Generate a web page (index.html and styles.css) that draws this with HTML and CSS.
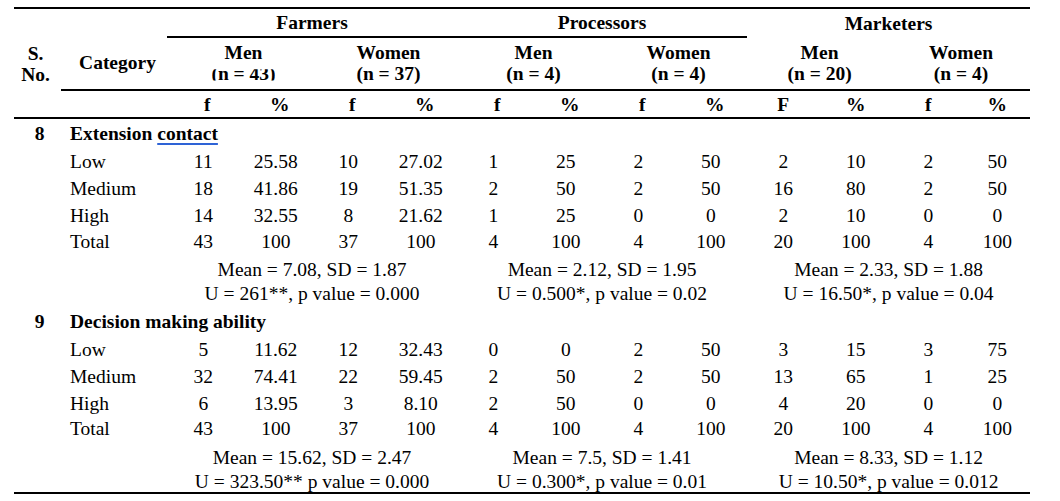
FILE: index.html
```html
<!DOCTYPE html>
<html lang="en">
<head>
<meta charset="utf-8">
<title>Table</title>
<link rel="stylesheet" href="styles.css">
</head>
<body>
<div class="page">
<table class="data">
  <colgroup>
    <col class="c-sno"><col class="c-cat">
    <col class="c-num"><col class="c-num"><col class="c-num"><col class="c-num">
    <col class="c-num"><col class="c-num"><col class="c-num"><col class="c-num">
    <col class="c-num"><col class="c-num"><col class="c-num"><col class="c-last">
  </colgroup>
  <thead>
    <tr class="r-group">
      <th></th><th></th>
      <th colspan="4" class="bb">Farmers</th>
      <th colspan="4" class="bb">Processors</th>
      <th colspan="4">Marketers</th>
    </tr>
    <tr class="r-sub">
      <th class="sno-h">S.<br>No.</th>
      <th class="bb cat-h">Category</th>
      <th colspan="2" class="bb sh">Men<br><span class="clipped">(n = 43)</span></th>
      <th colspan="2" class="bb sh">Women<br>(n = 37)</th>
      <th colspan="2" class="bb sh">Men<br>(n = 4)</th>
      <th colspan="2" class="bb sh">Women<br>(n = 4)</th>
      <th colspan="2" class="bb">Men<br>(n = 20)</th>
      <th colspan="2" class="bb">Women<br>(n = 4)</th>
    </tr>
    <tr class="r-fp">
      <th></th><th></th>
      <th class="sh">f</th><th class="sh">%</th><th class="sh">f</th><th class="sh">%</th>
      <th class="sh">f</th><th class="sh">%</th><th class="sh">f</th><th class="sh">%</th>
      <th>F</th><th>%</th><th>f</th><th>%</th>
    </tr>
  </thead>
  <tbody>
    <tr class="r-sec">
      <td class="sno">8</td>
      <td colspan="13" class="sec">Extension <span class="spell">contact</span></td>
    </tr>
    <tr class="r-28">
      <td></td><td class="cat">Low</td>
      <td>11</td><td>25.58</td><td>10</td><td>27.02</td>
      <td>1</td><td>25</td><td>2</td><td>50</td>
      <td>2</td><td>10</td><td>2</td><td>50</td>
    </tr>
    <tr class="r-27">
      <td></td><td class="cat">Medium</td>
      <td>18</td><td>41.86</td><td>19</td><td>51.35</td>
      <td>2</td><td>50</td><td>2</td><td>50</td>
      <td>16</td><td>80</td><td>2</td><td>50</td>
    </tr>
    <tr class="r-27">
      <td></td><td class="cat">High</td>
      <td>14</td><td>32.55</td><td>8</td><td>21.62</td>
      <td>1</td><td>25</td><td>0</td><td>0</td>
      <td>2</td><td>10</td><td>0</td><td>0</td>
    </tr>
    <tr class="r-25">
      <td></td><td class="cat">Total</td>
      <td>43</td><td>100</td><td>37</td><td>100</td>
      <td>4</td><td>100</td><td>4</td><td>100</td>
      <td>20</td><td>100</td><td>4</td><td>100</td>
    </tr>
    <tr class="r-stat">
      <td></td><td></td>
      <td colspan="4" class="stat"><div class="stat-box">Mean = 7.08, SD = 1.87<br>U = 261**, p value = 0.000</div></td>
      <td colspan="4" class="stat"><div class="stat-box">Mean = 2.12, SD = 1.95<br>U = 0.500*, p value = 0.02</div></td>
      <td colspan="4" class="stat"><div class="stat-box">Mean = 2.33, SD = 1.88<br>U = 16.50*, p value = 0.04</div></td>
    </tr>
    <tr class="r-sec2">
      <td class="sno">9</td>
      <td colspan="13" class="sec">Decision making ability</td>
    </tr>
    <tr class="r-27">
      <td></td><td class="cat">Low</td>
      <td>5</td><td>11.62</td><td>12</td><td>32.43</td>
      <td>0</td><td>0</td><td>2</td><td>50</td>
      <td>3</td><td>15</td><td>3</td><td>75</td>
    </tr>
    <tr class="r-27">
      <td></td><td class="cat">Medium</td>
      <td>32</td><td>74.41</td><td>22</td><td>59.45</td>
      <td>2</td><td>50</td><td>2</td><td>50</td>
      <td>13</td><td>65</td><td>1</td><td>25</td>
    </tr>
    <tr class="r-27">
      <td></td><td class="cat">High</td>
      <td>6</td><td>13.95</td><td>3</td><td>8.10</td>
      <td>2</td><td>50</td><td>0</td><td>0</td>
      <td>4</td><td>20</td><td>0</td><td>0</td>
    </tr>
    <tr class="r-23">
      <td></td><td class="cat">Total</td>
      <td>43</td><td>100</td><td>37</td><td>100</td>
      <td>4</td><td>100</td><td>4</td><td>100</td>
      <td>20</td><td>100</td><td>4</td><td>100</td>
    </tr>
    <tr class="r-stat2">
      <td></td><td></td>
      <td colspan="4" class="stat"><div class="stat-box">Mean = 15.62, SD = 2.47<br>U = 323.50** p value = 0.000</div></td>
      <td colspan="4" class="stat"><div class="stat-box">Mean = 7.5, SD = 1.41<br>U = 0.300*, p value = 0.01</div></td>
      <td colspan="4" class="stat"><div class="stat-box">Mean = 8.33, SD = 1.12<br>U = 10.50*, p value = 0.012</div></td>
    </tr>
  </tbody>
</table>
</div>
</body>
</html>
```

FILE: styles.css
```css
html, body {
  margin: 0;
  padding: 0;
  background: #ffffff;
}

body {
  font-family: "Liberation Serif", "Times New Roman", serif;
  font-size: 19.5px;
  color: #000000;
}

.page {
  padding: 7px 0 0 14px;
}

.data {
  border-collapse: separate;
  border-spacing: 0;
  table-layout: fixed;
  width: 1016px;
  border-top: 2px solid #000;
  border-bottom: 2px solid #000;
}

.c-sno { width: 47px; }
.c-cat { width: 106px; }
.c-num { width: 72.5px; }
.c-last { width: 65.5px; }

th, td {
  padding: 0;
  text-align: center;
  vertical-align: middle;
  line-height: 21px;
  white-space: nowrap;
}

th {
  font-weight: bold;
}

.bb {
  border-bottom: 2px solid #000;
}

/* header rows */
.r-group { height: 29px; }

.r-sub { height: 53px; }
.r-sub th { padding-bottom: 2px; }

.r-fp { height: 28px; }
.r-fp th { border-bottom: 2px solid #000; }

.r-sub th.sh,
.r-fp th.sh {
  padding-left: 8px;
}

.sno-h {
  padding-right: 4px;
}

.r-sub th.cat-h {
  padding-left: 7px;
}

.clipped {
  display: inline-block;
  clip-path: inset(32% 0 14% 0);
}

/* body rows */
.sno {
  font-weight: bold;
  padding-left: 4px;
}

.sec {
  text-align: left;
  font-weight: bold;
  padding-left: 9px;
}

.spell {
  text-decoration: underline;
  text-decoration-color: #2e63d6;
  text-decoration-thickness: 2px;
  text-underline-offset: 3px;
}

.cat {
  text-align: left;
  padding-left: 9px;
}

.r-sec { height: 28px; }
.r-sec2 { height: 29px; }
.r-28 { height: 28px; }
.r-27 { height: 27px; }
.r-25 { height: 25px; }
.r-23 { height: 23px; }

.stat {
  vertical-align: top;
}

.stat-box {
  line-height: 24px;
  height: 46px;
}

.r-stat { height: 53px; }
.r-stat .stat { padding-top: 4px; }

.r-stat2 { height: 52px; }
.r-stat2 .stat { padding-top: 6px; }
```
